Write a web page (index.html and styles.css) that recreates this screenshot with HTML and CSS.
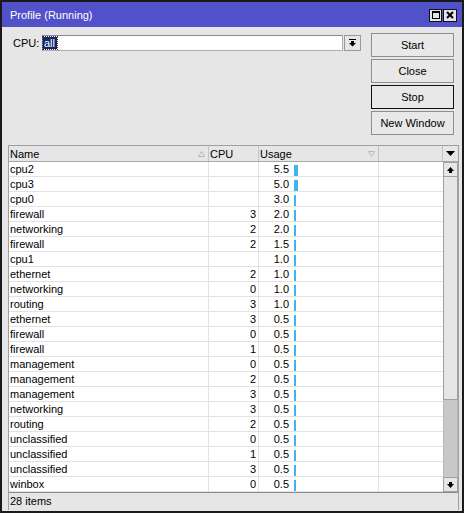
FILE: index.html
```html
<!DOCTYPE html>
<html>
<head>
<meta charset="utf-8">
<link rel="stylesheet" href="styles.css">
</head>
<body>
<div class="window">
  <div class="titlebar">
    <span class="title">Profile (Running)</span>
    <div class="tb-btns">
      <span class="tb-btn tb-max"><svg width="8" height="8" viewBox="0 0 8 8"><rect x="0.5" y="0.5" width="7" height="7" fill="none" stroke="#000"/><rect x="0" y="0" width="8" height="2" fill="#000"/></svg></span>
      <span class="tb-btn tb-close"><svg width="8" height="8" viewBox="0 0 8 8"><path d="M1 1L7 7M7 1L1 7" stroke="#000" stroke-width="2"/></svg></span>
    </div>
  </div>
  <div class="top">
    <div class="form">
      <span class="label">CPU:</span>
      <div class="select"><span class="sel">all</span></div>
      <div class="dd-btn"><svg width="7" height="8" viewBox="0 0 7 8"><rect x="0" y="0" width="7" height="1" fill="#000"/><path d="M2 2H5V4H7L3.5 7.5L0 4H2Z" fill="#000"/></svg></div>
    </div>
    <div class="buttons">
      <div class="btn">Start</div>
      <div class="btn">Close</div>
      <div class="btn btn-default">Stop</div>
      <div class="btn">New Window</div>
    </div>
  </div>
  <div class="list">
    <div class="head">
      <div class="hcell hname"><span>Name</span><svg class="sort" width="7" height="6" viewBox="0 0 7 6"><path d="M3.5 0.5L6.5 5.5H0.5Z" fill="none" stroke="#b8b8b8"/></svg></div>
      <div class="hcell">CPU</div>
      <div class="hcell husage"><span>Usage</span><svg class="sort" width="7" height="6" viewBox="0 0 7 6"><path d="M0.5 0.5H6.5L3.5 5.5Z" fill="none" stroke="#b8b8b8"/></svg></div>
      <div class="hcell"></div>
      <div class="hcell hmenu"><svg width="9" height="5" viewBox="0 0 9 5"><path d="M0 0H9L4.5 5Z" fill="#000"/></svg></div>
    </div>
    <div class="body">
      <div class="rows">
        <div class="row"><div class="c">cpu2</div><div class="c num"></div><div class="c usage"><span class="val">5.5</span><span class="bar" style="width:4px"></span></div><div class="c last"></div></div>
        <div class="row"><div class="c">cpu3</div><div class="c num"></div><div class="c usage"><span class="val">5.0</span><span class="bar" style="width:4px"></span></div><div class="c last"></div></div>
        <div class="row"><div class="c">cpu0</div><div class="c num"></div><div class="c usage"><span class="val">3.0</span><span class="bar" style="width:2px"></span></div><div class="c last"></div></div>
        <div class="row"><div class="c">firewall</div><div class="c num">3</div><div class="c usage"><span class="val">2.0</span><span class="bar" style="width:2px"></span></div><div class="c last"></div></div>
        <div class="row"><div class="c">networking</div><div class="c num">2</div><div class="c usage"><span class="val">2.0</span><span class="bar" style="width:2px"></span></div><div class="c last"></div></div>
        <div class="row"><div class="c">firewall</div><div class="c num">2</div><div class="c usage"><span class="val">1.5</span><span class="bar" style="width:2px"></span></div><div class="c last"></div></div>
        <div class="row"><div class="c">cpu1</div><div class="c num"></div><div class="c usage"><span class="val">1.0</span><span class="bar" style="width:2px"></span></div><div class="c last"></div></div>
        <div class="row"><div class="c">ethernet</div><div class="c num">2</div><div class="c usage"><span class="val">1.0</span><span class="bar" style="width:2px"></span></div><div class="c last"></div></div>
        <div class="row"><div class="c">networking</div><div class="c num">0</div><div class="c usage"><span class="val">1.0</span><span class="bar" style="width:2px"></span></div><div class="c last"></div></div>
        <div class="row"><div class="c">routing</div><div class="c num">3</div><div class="c usage"><span class="val">1.0</span><span class="bar" style="width:2px"></span></div><div class="c last"></div></div>
        <div class="row"><div class="c">ethernet</div><div class="c num">3</div><div class="c usage"><span class="val">0.5</span><span class="bar" style="width:2px"></span></div><div class="c last"></div></div>
        <div class="row"><div class="c">firewall</div><div class="c num">0</div><div class="c usage"><span class="val">0.5</span><span class="bar" style="width:2px"></span></div><div class="c last"></div></div>
        <div class="row"><div class="c">firewall</div><div class="c num">1</div><div class="c usage"><span class="val">0.5</span><span class="bar" style="width:2px"></span></div><div class="c last"></div></div>
        <div class="row"><div class="c">management</div><div class="c num">0</div><div class="c usage"><span class="val">0.5</span><span class="bar" style="width:2px"></span></div><div class="c last"></div></div>
        <div class="row"><div class="c">management</div><div class="c num">2</div><div class="c usage"><span class="val">0.5</span><span class="bar" style="width:2px"></span></div><div class="c last"></div></div>
        <div class="row"><div class="c">management</div><div class="c num">3</div><div class="c usage"><span class="val">0.5</span><span class="bar" style="width:2px"></span></div><div class="c last"></div></div>
        <div class="row"><div class="c">networking</div><div class="c num">3</div><div class="c usage"><span class="val">0.5</span><span class="bar" style="width:2px"></span></div><div class="c last"></div></div>
        <div class="row"><div class="c">routing</div><div class="c num">2</div><div class="c usage"><span class="val">0.5</span><span class="bar" style="width:2px"></span></div><div class="c last"></div></div>
        <div class="row"><div class="c">unclassified</div><div class="c num">0</div><div class="c usage"><span class="val">0.5</span><span class="bar" style="width:2px"></span></div><div class="c last"></div></div>
        <div class="row"><div class="c">unclassified</div><div class="c num">1</div><div class="c usage"><span class="val">0.5</span><span class="bar" style="width:2px"></span></div><div class="c last"></div></div>
        <div class="row"><div class="c">unclassified</div><div class="c num">3</div><div class="c usage"><span class="val">0.5</span><span class="bar" style="width:2px"></span></div><div class="c last"></div></div>
        <div class="row"><div class="c">winbox</div><div class="c num">0</div><div class="c usage"><span class="val">0.5</span><span class="bar" style="width:2px"></span></div><div class="c last"></div></div>
      </div>
      <div class="scrollbar">
        <div class="sb-btn"><svg width="7" height="6" viewBox="0 0 7 6"><path d="M3.5 0L7 4H5V6H2V4H0Z" fill="#000"/></svg></div>
        <div class="sb-thumb"></div>
        <div class="sb-track"></div>
        <div class="sb-btn"><svg width="7" height="6" viewBox="0 0 7 6"><path d="M2 0H5V2H7L3.5 6L0 2H2Z" fill="#000"/></svg></div>
      </div>
    </div>
    <div class="status">28 items</div>
  </div>
</div>
</body>
</html>
```
FILE: styles.css
```css
* { box-sizing: border-box; }
body {
  margin: 0;
  background: #fff;
  font-family: "Liberation Sans", Arial, sans-serif;
  font-size: 11px;
  color: #000;
}
.window {
  width: 464px;
  height: 513px;
  border: 2px solid #1a1a1a;
  background: #e6e6e6;
  display: flex;
  flex-direction: column;
}
.titlebar {
  height: 25px;
  flex: none;
  background: #5151c9;
  color: #fff;
  display: flex;
  align-items: center;
  padding: 0 5px 0 8px;
}
.title { line-height: 14px; padding-top: 1px; }
.tb-btns { margin-left: auto; display: flex; gap: 1px; padding-top: 1px; }
.tb-btn {
  width: 13px;
  height: 13px;
  border: 1px solid #111;
  background: #e4e4e4;
  display: flex;
  align-items: center;
  justify-content: center;
}
.tb-close { width: 14px; }
.top {
  height: 118px;
  flex: none;
  display: flex;
  padding: 6px 8px 0 11px;
}
.form {
  height: 16px;
  margin-top: 2px;
  display: flex;
  align-items: center;
}
.label { width: 29px; flex: none; }
.select {
  width: 301px;
  height: 16px;
  background: #fff;
  border: 1px solid #8a8a8a;
  border-right-color: #b0b0b0;
  border-bottom-color: #b0b0b0;
  padding: 1px 0 0 0;
  display: flex;
  align-items: flex-start;
}
.sel {
  background: #10276e;
  color: #fff;
  height: 12px;
  line-height: 12px;
  padding: 0 2px 0 1px;
  outline: 1px dotted #333;
}
.dd-btn {
  width: 17px;
  height: 16px;
  margin-left: 1px;
  border: 1px solid #9a9a9a;
  background: #e6e6e6;
  display: flex;
  align-items: center;
  justify-content: center;
}
.buttons {
  margin-left: auto;
  width: 83px;
  display: flex;
  flex-direction: column;
  gap: 2px;
}
.btn {
  height: 24px;
  border: 1px solid #8e8e8e;
  background: #e8e8e8;
  display: flex;
  align-items: center;
  justify-content: center;
}
.btn-default { border-color: #111; }
.list {
  margin: 0 3px 0 6px;
  height: 365px;
  flex: none;
  border-left: 1px solid #a0a0a0;
  border-top: 1px solid #a0a0a0;
  border-right: 1px solid #a0a0a0;
  display: flex;
  flex-direction: column;
}
.head {
  height: 16px;
  flex: none;
  display: grid;
  grid-template-columns: 200px 50px 120px 64px 15px;
  background: #e6e6e6;
  border-bottom: 1px solid #a8a8a8;
}
.hcell {
  border-right: 1px solid #c4c4c4;
  padding-left: 1px;
  display: flex;
  align-items: center;
  line-height: 14px;
}
.hname, .husage { justify-content: space-between; padding-right: 3px; }
.sort { margin-top: 1px; }
.hmenu { border-right: none; justify-content: center; padding-left: 0; }
.body {
  height: 330px;
  flex: none;
  display: flex;
}
.rows {
  width: 434px;
  background: #fff;
}
.row {
  height: 15px;
  display: grid;
  grid-template-columns: 200px 50px 120px 64px;
  border-bottom: 1px solid #e2e2e2;
}
.c {
  border-right: 1px solid #e2e2e2;
  padding-left: 1px;
  line-height: 14px;
  white-space: nowrap;
}
.c.last { border-right: none; }
.c.num { text-align: right; padding-right: 2px; }
.c.usage { display: flex; padding-left: 0; }
.val { width: 30px; text-align: right; }
.bar {
  height: 11px;
  margin: 3px 0 0 5px;
  background: #3fb5ef;
}
.scrollbar {
  width: 15px;
  display: flex;
  flex-direction: column;
  background: #c8c8c8;
}
.sb-btn {
  height: 15px;
  flex: none;
  border: 1px solid #a0a0a0;
  background: #e6e6e6;
  display: flex;
  align-items: center;
  justify-content: center;
}
.sb-thumb {
  height: 223px;
  flex: none;
  border: 1px solid #a0a0a0;
  border-top: none;
  background: #e6e6e6;
}
.sb-track {
  flex: 1;
  border-left: 1px solid #b8b8b8;
  border-right: 1px solid #b8b8b8;
}
.status {
  height: 18px;
  flex: none;
  border-top: 1px solid #8a8a8a;
  background: #e6e6e6;
  padding-left: 1px;
  line-height: 16px;
}
```
